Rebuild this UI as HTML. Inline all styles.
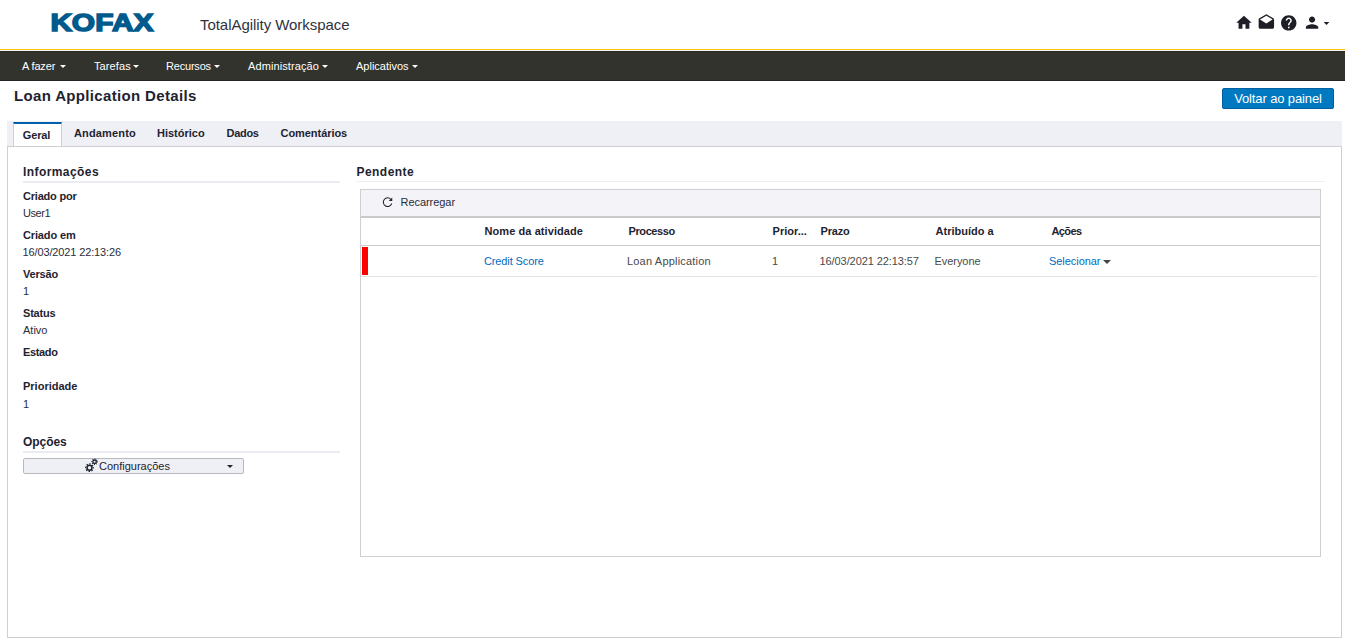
<!DOCTYPE html>
<html lang="pt-BR">
<head>
<meta charset="utf-8">
<title>TotalAgility Workspace - Loan Application Details</title>
<style>
*{box-sizing:border-box;margin:0;padding:0}
html,body{width:1345px;height:640px;overflow:hidden;background:#fff}
body{font-family:"Liberation Sans",sans-serif;font-size:11px;color:#1f2330;position:relative}
a{text-decoration:none;color:inherit}
ul{list-style:none}
.abs{position:absolute;white-space:nowrap}

/* header */
#hdr{position:absolute;left:0;top:0;width:1345px;height:49px;background:#fff}
#logo{position:absolute;left:45px;top:5px;width:120px;height:40px}
#appname{position:absolute;left:200px;top:16px;font-size:15px;line-height:18px;color:#30333d;white-space:nowrap;letter-spacing:-0.05px}
#yline{position:absolute;left:0;top:49px;width:1345px;height:1px;background:#ffc107}
#yline2{position:absolute;left:0;top:50px;width:1345px;height:1px;background:#f6f7fb}
#hicons{position:absolute;left:0;top:0}

/* nav */
#nav{position:absolute;left:0;top:51px;width:1345px;height:30px;background:#33332d;border-top:1px solid #2a2a25;border-bottom:1px solid #232320}
#nav li{position:absolute;top:-1px;height:30px;line-height:30px;color:#fff;font-size:11px;white-space:nowrap}
#nav li i{display:inline-block;width:0;height:0;border-left:3px solid transparent;border-right:3px solid transparent;border-top:3px solid #fff;margin-left:3px;vertical-align:middle;position:relative;top:-1px}

/* title row */
#title{position:absolute;left:14px;top:87px;font-size:15px;font-weight:bold;line-height:18px;letter-spacing:0.34px;white-space:nowrap;color:#1f2330}
#back{position:absolute;left:1222px;top:88px;width:112px;height:21px;background:#0079c1;border:1px solid #005f9e;border-radius:2px;color:#fff;font-size:13px;line-height:19px;text-align:center;white-space:nowrap;letter-spacing:-0.12px}

/* tabs */
#tabs{position:absolute;left:7px;top:121px;width:1335px;height:26px;background:#eff0f6;border-bottom:1px solid #cfcfcf}
#tabs li{position:absolute;top:0;height:25px;line-height:25px;font-weight:bold;font-size:11px;white-space:nowrap;color:#1f2330}
#tabs li.on{left:6px;top:1px;width:49px;height:24px;padding-right:2px;background:#fff;border:1px solid #cfcfcf;border-bottom:none;border-top:2px solid #0060b0;line-height:22px;text-align:center;letter-spacing:-0.1px}

/* panel */
#panel{position:absolute;left:7px;top:146px;width:1335px;height:492px;border:1px solid #cfcfcf;background:#fff}
.h3{position:absolute;font-size:12px;font-weight:bold;line-height:14px;white-space:nowrap;color:#1f2330}
.ul{position:absolute;height:2px;background:#ebecf3}
.lbl{position:absolute;left:23px;font-weight:bold;font-size:11px;line-height:14px;white-space:nowrap;color:#1f2330}
.val{position:absolute;left:23px;font-size:11px;line-height:14px;white-space:nowrap;color:#2a2d3a}

#cfg{position:absolute;left:23px;top:458px;width:221px;height:16px;background:#eff0f6;border:1px solid #b9b9bd;border-radius:2px;font-size:11px;line-height:14px;color:#1f2330}

/* grid */
#grid{position:absolute;left:360px;top:189px;width:961px;height:368px;border:1px solid #cfcfcf;background:#fff}
#tb{position:absolute;left:0;top:0;width:959px;height:28px;background:#f3f3f8;border-bottom:2px solid #c9c9c9}
#gh{position:absolute;left:0;top:28px;width:959px;height:28px;border-bottom:1px solid #cdcdcd}
#gh span{position:absolute;top:6px;font-weight:bold;font-size:11px;line-height:14px;white-space:nowrap;color:#1f2330}
#gr{position:absolute;left:0;top:56px;width:957px;height:31px;border-bottom:1px solid #e2e2e2}
#gr span{position:absolute;top:8px;font-size:11px;line-height:14px;white-space:nowrap;color:#4a4a4a}
#gr span.lk{color:#006bbd}
</style>
</head>
<body>

<div id="hdr">
  <svg id="logo" viewBox="0 0 120 40">
    <g transform="translate(0,26) scale(1.22,1)">
      <text x="4.426 21.885 41.230 54.918 72.541" y="0" font-family="Liberation Sans, sans-serif" font-weight="bold" font-size="24.500" fill="#005a8c" stroke="#005a8c" stroke-width="1.500" stroke-linejoin="miter">KOFAX</text>
    </g>
  </svg>
  <div id="appname">TotalAgility Workspace</div>
  <div id="hicons">
    <svg style="position:absolute;left:1225px;top:5px;width:120px;height:40px" viewBox="0 0 120 40" fill="#1e1e26">
      <g transform="translate(9.700,8.430) scale(0.771)"><path d="M10 20v-6h4v6h5v-8h3L12 3 2 12h3v8z"/></g>
      <g transform="translate(32.100,8.380) scale(0.771)"><path d="M21.99 8c0-.72-.37-1.35-.94-1.7L12 1 2.950 6.300C2.380 6.650 2 7.280 2 8v10c0 1.100.9 2 2 2h16c1.100 0 2-.9 2-2l-.01-10zM12 13L3.740 7.840 12 3l8.260 4.840L12 13z"/></g>
      <g transform="translate(54.500,8.650) scale(0.771)"><path d="M12 2C6.480 2 2 6.480 2 12s4.480 10 10 10 10-4.480 10-10S17.520 2 12 2zm1 17h-2v-2h2v2zm2.070-7.750l-.9.920C13.450 12.900 13 13.500 13 15h-2v-.5c0-1.100.45-2.100 1.170-2.830l1.240-1.260c.37-.36.59-.86.59-1.410 0-1.100-.9-2-2-2s-2 .9-2 2H8c0-2.210 1.790-4 4-4s4 1.790 4 4c0 .88-.36 1.680-.93 2.250z"/></g>
      <g transform="translate(77.800,8.430) scale(0.771)"><path d="M12 12c2.210 0 4-1.790 4-4s-1.790-4-4-4-4 1.790-4 4 1.790 4 4 4zm0 2c-2.670 0-8 1.340-8 4v2h16v-2c0-2.660-5.330-4-8-4z"/></g>
      <path d="M98.700 16.900h5.600l-2.800 3.100z"/>
    </svg>
  </div>
</div>
<div id="yline"></div><div id="yline2"></div>

<ul id="nav">
  <li style="letter-spacing:-0.15px;left:22px">A fazer<i style="margin-left:4.500px"></i></li>
  <li style="letter-spacing:0.1px;left:94px">Tarefas<i style="margin-left:2px"></i></li>
  <li style="letter-spacing:-0.2px;left:166px">Recursos<i></i></li>
  <li style="letter-spacing:0.1px;left:248px">Administração<i></i></li>
  <li style="left:356px">Aplicativos<i></i></li>
</ul>

<h1 id="title">Loan Application Details</h1>
<a id="back">Voltar ao painel</a>

<div id="panel"></div>
<ul id="tabs">
  <li class="on">Geral</li>
  <li style="left:67px;letter-spacing:0.15px">Andamento</li>
  <li style="left:150px">Histórico</li>
  <li style="left:219.500px;letter-spacing:-0.3px">Dados</li>
  <li style="left:273.500px;letter-spacing:-0.05px">Comentários</li>
</ul>

<!-- left column -->
<div class="h3" style="left:23px;top:165px;letter-spacing:0.42px">Informações</div>
<div class="ul" style="left:23px;top:181px;width:317px"></div>

<div class="lbl" style="letter-spacing:-0.2px;top:189px">Criado por</div>
<div class="val" style="letter-spacing:-0.45px;top:206px">User1</div>
<div class="lbl" style="top:228px;letter-spacing:-0.14px">Criado em</div>
<div class="val" style="letter-spacing:-0.13px;margin-left:-0.500px;top:245px">16/03/2021 22:13:26</div>
<div class="lbl" style="top:267px;letter-spacing:-0.18px">Versão</div>
<div class="val" style="top:284px">1</div>
<div class="lbl" style="top:306px;letter-spacing:-0.2px">Status</div>
<div class="val" style="top:323px">Ativo</div>
<div class="lbl" style="letter-spacing:-0.35px;top:345px">Estado</div>
<div class="lbl" style="top:379px">Prioridade</div>
<div class="val" style="top:397px">1</div>

<div class="h3" style="left:23px;top:435px;letter-spacing:-0.05px">Opções</div>
<div class="ul" style="left:23px;top:451px;width:317px"></div>
<div id="cfg">
  <svg style="position:absolute;left:60px;top:-1px;width:16px;height:16px;overflow:visible" viewBox="0 0 16 16"><g fill="none" stroke="#1f2330"><circle cx="5.500" cy="9.700" r="2.450" stroke-width="1.500"/><circle cx="5.500" cy="9.700" r="3.800" stroke-width="1.200" stroke-dasharray="1.433 1.552" transform="rotate(-10 5.500 9.700)"/><circle cx="10.600" cy="3.800" r="1.750" stroke-width="1.400"/><circle cx="10.600" cy="3.800" r="2.750" stroke-width="1.000" stroke-dasharray="1.037 1.123" transform="rotate(-10 10.600 3.800)"/></g></svg>
  <span class="abs" style="left:75px;top:0">Configurações</span>
  <i style="position:absolute;left:202.500px;top:6px;width:0;height:0;border-left:3px solid transparent;border-right:3px solid transparent;border-top:3px solid #1f2330"></i>
</div>

<!-- right column -->
<div class="h3" style="left:356.500px;top:165px;letter-spacing:0.45px">Pendente</div>
<div class="ul" style="left:356px;top:181px;width:969px;height:1px;background:#eef0f5"></div>

<div id="grid">
  <div id="tb">
    <svg style="position:absolute;left:20px;top:6px;width:14px;height:14px" viewBox="0 0 14 14"><g transform="translate(0.550,0.200)"><path d="M9.300 3.100A4.300 4.300 0 1 0 10.150 7.300" fill="none" stroke="#1f2330" stroke-width="1.050"/><path d="M10.700 1.200v3.500h-3.500z" fill="#1f2330"/></g></svg>
    <span class="abs" style="left:39.500px;top:5px;font-size:11px;line-height:14px;color:#2a2d3a;letter-spacing:-0.05px">Recarregar</span>
  </div>
  <div id="gh">
    <span style="left:123.500px;letter-spacing:0.08px">Nome da atividade</span>
    <span style="letter-spacing:-0.4px;left:267.500px">Processo</span>
    <span style="left:411.600px">Prior...</span>
    <span style="letter-spacing:-0.2px;left:459.500px">Prazo</span>
    <span style="left:574.600px">Atribuído a</span>
    <span style="letter-spacing:-0.55px;left:690.400px">Ações</span>
  </div>
  <div id="gr">
    <div style="position:absolute;left:1px;top:1px;width:6px;height:28px;background:#ff0000"></div>
    <span class="lk" style="letter-spacing:-0.12px;left:123px">Credit Score</span>
    <span style="left:266px;letter-spacing:0.19px">Loan Application</span>
    <span style="left:411px">1</span>
    <span style="letter-spacing:-0.08px;left:458.500px">16/03/2021 22:13:57</span>
    <span style="letter-spacing:-0.05px;left:573.500px">Everyone</span>
    <span class="lk" style="letter-spacing:-0.05px;margin-left:-1px;left:689px">Selecionar</span>
    <i style="position:absolute;left:742px;top:14px;width:0;height:0;border-left:4px solid transparent;border-right:4px solid transparent;border-top:4px solid #444"></i>
  </div>
</div>

</body>
</html>
